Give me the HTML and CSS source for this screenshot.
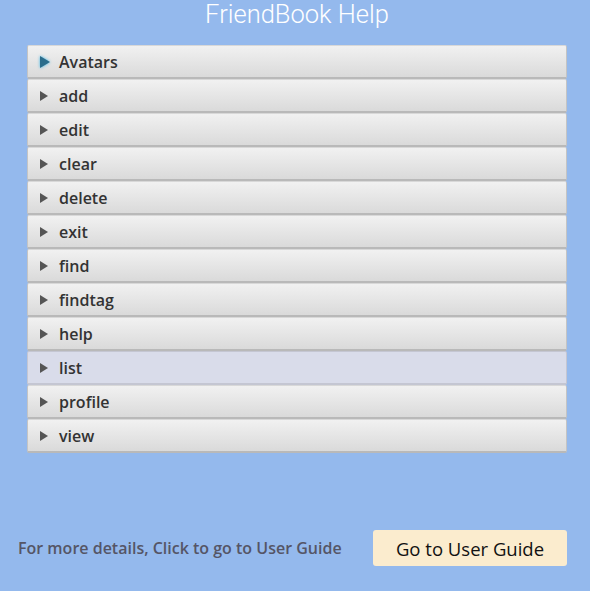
FILE: index.html
```html
<!DOCTYPE html>
<html>
<head>
<meta charset="utf-8">
<link rel="stylesheet" href="styles.css">
</head>
<body>
<div class="page">
  <h1 class="title">FriendBook Help</h1>
  <div class="accordion">
    <div class="pane focused"><span class="arrow"></span><span class="label">Avatars</span></div>
    <div class="pane"><span class="arrow"></span><span class="label">add</span></div>
    <div class="pane"><span class="arrow"></span><span class="label">edit</span></div>
    <div class="pane"><span class="arrow"></span><span class="label">clear</span></div>
    <div class="pane"><span class="arrow"></span><span class="label">delete</span></div>
    <div class="pane"><span class="arrow"></span><span class="label">exit</span></div>
    <div class="pane"><span class="arrow"></span><span class="label">find</span></div>
    <div class="pane"><span class="arrow"></span><span class="label">findtag</span></div>
    <div class="pane"><span class="arrow"></span><span class="label">help</span></div>
    <div class="pane hover"><span class="arrow"></span><span class="label">list</span></div>
    <div class="pane"><span class="arrow"></span><span class="label">profile</span></div>
    <div class="pane"><span class="arrow"></span><span class="label">view</span></div>
  </div>
  <div class="footer">
    <span class="hint">For more details, Click to go to User Guide</span>
    <button class="guide">Go to User Guide</button>
  </div>
</div>
</body>
</html>
```

FILE: styles.css
```css
html, body {
  margin: 0;
  padding: 0;
}
body {
  background: #94b9ed;
  width: 590px;
  height: 591px;
  overflow: hidden;
}
.page {
  display: flex;
  flex-direction: column;
  height: 591px;
}
.title {
  margin: 0;
  height: 45px;
  box-sizing: border-box;
  text-align: center;
  font-family: Roboto, "Open Sans", sans-serif;
  font-weight: 300;
  font-size: 25.5px;
  line-height: 29px;
  color: #ffffff;
  padding-left: 4px;
}
.accordion {
  margin: 0 23px 0 27px;
  display: flex;
  flex-direction: column;
}
.pane {
  height: 34px;
  box-sizing: border-box;
  display: flex;
  align-items: center;
  background: linear-gradient(#f1f1f1, #dadada);
  border: 1px solid #c4c4c4;
  border-top-color: #d8d8d8;
  border-bottom: 2px solid #b9b9b9;
  border-radius: 2px;
  padding-left: 12px;
}
.pane.hover {
  background: #d9dcea;
  border-color: #c4c6d2;
}
.arrow {
  width: 0;
  height: 0;
  border-top: 5px solid transparent;
  border-bottom: 5px solid transparent;
  border-left: 8px solid #555555;
  margin-right: 11px;
}
.focused .arrow {
  border-top-width: 6px;
  border-bottom-width: 6px;
  border-left-width: 10px;
  border-left-color: #2b6d8c;
  filter: drop-shadow(0 0 1.5px #3fb6e6);
  margin-right: 9px;
}
.label {
  font-family: "Open Sans", sans-serif;
  font-weight: 600;
  font-size: 16px;
  color: #333333;
  line-height: 20px;
}
.footer {
  margin-top: auto;
  margin-bottom: 25px;
  display: flex;
  align-items: center;
  justify-content: space-between;
  padding: 0 23px 0 18px;
}
.hint {
  font-family: "Open Sans", sans-serif;
  font-weight: 600;
  font-size: 16px;
  color: #555566;
}
.guide {
  width: 194px;
  height: 36px;
  background: #fbecce;
  border: none;
  border-radius: 3px;
  font-family: "Open Sans", sans-serif;
  font-size: 18.5px;
  color: #111111;
  padding: 0;
}
```
